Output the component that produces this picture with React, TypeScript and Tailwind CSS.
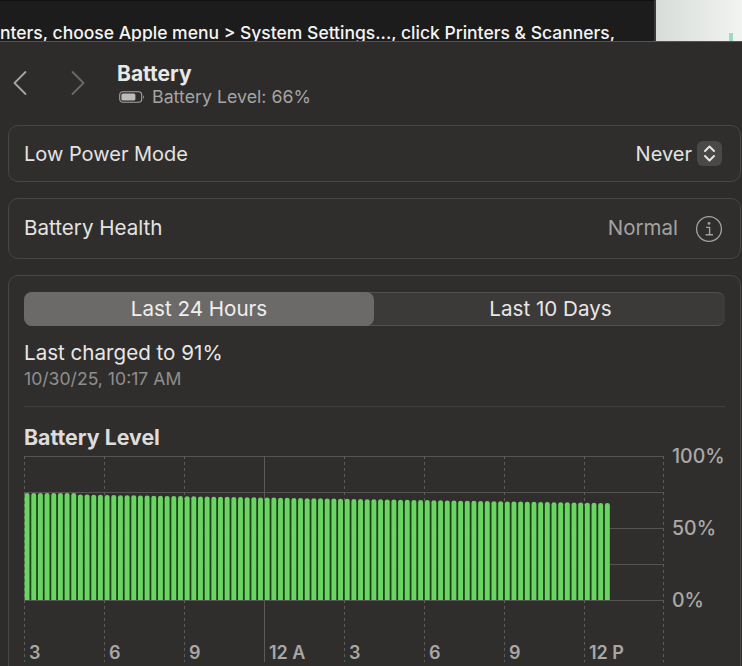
const font = "font-['Inter','Liberation_Sans',sans-serif]";

const hours = ["3", "6", "9", "12 A", "3", "6", "9", "12 P"];

// bar tops in px from the top of the chart, drifts down from 37 to 47
const bars = Array.from({ length: 88 }, (_, i) => {
  if (i < 8) return 37;
  return 38.5 + ((i - 8) / 79) * 8.5;
});

function Chevron({ dir, className }: { dir: "left" | "right"; className: string }) {
  return (
    <svg width="16" height="26" viewBox="0 0 16 26" fill="none" className={className}>
      <path
        d={dir === "left" ? "M13.5 2 L2.5 13 L13.5 24" : "M2.5 2 L13.5 13 L2.5 24"}
        stroke="currentColor"
        strokeWidth="1.8"
        strokeLinecap="round"
        strokeLinejoin="round"
      />
    </svg>
  );
}

function BatteryIcon() {
  return (
    <svg width="26" height="14" viewBox="0 0 26 14" fill="none">
      <rect x="0.7" y="1.7" width="22" height="10.6" rx="3.2" stroke="#a5a4a3" strokeWidth="1.1" />
      <rect x="2.4" y="3.4" width="14" height="7.2" rx="1.6" fill="#bdbcbb" />
      <path d="M24.2 5.2 C25.2 5.6 25.2 8.4 24.2 8.8 Z" fill="#a5a4a3" />
    </svg>
  );
}

function Stepper() {
  return (
    <span className="flex h-[25px] w-[25px] items-center justify-center rounded-[6px] bg-[#4a4948]">
      <svg width="13" height="19" viewBox="0 0 13 19" fill="none">
        <path
          d="M2 7 L6.5 2.5 L11 7 M2 12 L6.5 16.5 L11 12"
          stroke="#e6e5e4"
          strokeWidth="2"
          strokeLinecap="round"
          strokeLinejoin="round"
        />
      </svg>
    </span>
  );
}

function InfoIcon() {
  return (
    <svg width="28" height="28" viewBox="0 0 28 28" fill="none">
      <circle cx="14" cy="14" r="12.4" stroke="#a3a2a1" strokeWidth="1.3" />
      <circle cx="14" cy="8.4" r="1.4" fill="#a3a2a1" />
      <path d="M11 12.4 H14.6 V19.6 M10.6 19.8 H18" stroke="#a3a2a1" strokeWidth="1.4" />
    </svg>
  );
}

function BatteryChart() {
  return (
    <svg width="702" height="224" viewBox="0 -14 702 224" fill="none" className="block">
      {[0, 36, 72, 108, 144].map((y) => (
        <line key={y} x1="0" x2="639" y1={y + 0.5} y2={y + 0.5} stroke="#555453" strokeWidth="1" />
      ))}
      {[0, 80, 160, 240, 320, 400, 480, 560, 639].map((x) => (
        <line
          key={x}
          x1={x + 0.5}
          x2={x + 0.5}
          y1="0"
          y2="206"
          stroke="#5c5b5a"
          strokeWidth="1"
          strokeDasharray={x === 240 ? undefined : "3 3"}
        />
      ))}
      {bars.map((top, i) => {
        const l = i * 6.67 + 0.6;
        const r = l + 4.9;
        return (
          <g key={i}>
            {i < 87 && <rect x={r - 0.2} y={top + 3} width={2.2} height={141 - top} fill="#1e3f1b" />}
            <path
              d={`M${l} 144 V${top + 2} Q${l} ${top} ${l + 2.45} ${top} Q${r} ${top} ${r} ${top + 2} V144 Z`}
              fill="#6bd563"
            />
          </g>
        );
      })}
      <g fill="#aaa9a8" fontSize="19.5" fontWeight="500" fontFamily="Inter, 'Liberation Sans', sans-serif">
        <text x="648" y="0" dy="0.36em">100%</text>
        <text x="648" y="72" dy="0.36em">50%</text>
        <text x="648" y="144" dy="0.36em">0%</text>
      </g>
      <g fill="#a8a7a6" fontSize="18" fontWeight="600" fontFamily="Inter, 'Liberation Sans', sans-serif">
        {hours.map((h, i) => (
          <text key={i} x={i * 80 + 5} y="203">{h}</text>
        ))}
      </g>
    </svg>
  );
}

export default function App() {
  return (
    <div className={`flex h-[666px] w-[742px] flex-col overflow-hidden bg-[#2d2c2b] ${font}`}>
      {/* window behind */}
      <div className="flex h-[42px] shrink-0 border-b border-[#555453] bg-[#1c1c1c]">
        <div className="flex min-w-0 flex-1 flex-col overflow-hidden">
          <div className="h-[8px] border-b border-[#111111] bg-[#2a2a2a]" />
          <p className="mt-[21px] whitespace-nowrap text-[17.5px] leading-[22px] font-medium text-[#f4f4f4]">
            nters, choose Apple menu &gt; System Settings..., click Printers &amp; Scanners,
          </p>
        </div>
        <div className="relative w-[88px] shrink-0 border-l-2 border-[#3a3a3a] bg-gradient-to-r from-[#d8dcd9] to-[#f1f4f1]">
          <div className="absolute right-[9px] bottom-0 h-[8px] w-[4px] bg-[#9fd8c8]" />
        </div>
      </div>

      {/* header */}
      <header className="flex h-[83px] shrink-0 items-center pb-[1px] pl-[12px]">
        <Chevron dir="left" className="text-[#a6a5a4]" />
        <Chevron dir="right" className="ml-[42px] text-[#6b6a69]" />
        <div className="ml-[31px] flex flex-col pt-[2px]">
          <h1 className="text-[21px] leading-[25px] font-bold text-[#e9e8e7]">Battery</h1>
          <div className="flex items-center gap-[7px] pl-[2px]">
            <BatteryIcon />
            <span className="text-[17.8px] leading-[22px] text-[#a5a4a3]">Battery Level: 66%</span>
          </div>
        </div>
      </header>

      <main className="flex flex-col gap-[16px] pr-[1px] pl-[8px]">
        <section className="flex h-[57px] items-center justify-between rounded-[10px] border border-[#474645] bg-[#2f2e2d] pr-[18px] pl-[15px]">
          <span className="text-[20px] text-[#e4e3e2]">Low Power Mode</span>
          <div className="flex items-center gap-[5px]">
            <span className="text-[20px] text-[#e4e3e2]">Never</span>
            <Stepper />
          </div>
        </section>

        <section className="flex h-[61px] items-center justify-between rounded-[10px] border border-[#474645] bg-[#2f2e2d] pr-[17px] pl-[15px]">
          <span className="text-[20.6px] text-[#e4e3e2]">Battery Health</span>
          <div className="flex items-center gap-[17px]">
            <span className="text-[20.5px] text-[#a3a2a1]">Normal</span>
            <InfoIcon />
          </div>
        </section>

        <section className="h-[420px] rounded-[10px] border border-[#474645] bg-[#2f2e2d] px-[15px] pt-[16px]">
          <div className="flex h-[34px] rounded-[8px] border-y border-[#525150] bg-[#3b3a38]">
            <div className="-my-px flex w-[350px] items-center justify-center rounded-[8px] bg-[#6b6a69] text-[20.6px] text-[#f0efee]">
              Last 24 Hours
            </div>
            <div className="flex flex-1 items-center justify-center pl-[2px] text-[20.6px] text-[#e8e7e6]">
              Last 10 Days
            </div>
          </div>
          <p className="mt-[14px] text-[20.6px] leading-[26px] text-[#e8e7e6]">Last charged to 91%</p>
          <p className="mt-[1px] text-[17.6px] leading-[24px] text-[#8f8e8d]">10/30/25, 10:17 AM</p>
          <div className="mt-[15px] h-px bg-[#403f3e]" />
          <h2 className="mt-[18px] text-[21.3px] leading-[25px] font-bold text-[#dddcdb]">Battery Level</h2>
          <div className="-mt-[8px]">
            <BatteryChart />
          </div>
        </section>
      </main>
    </div>
  );
}
